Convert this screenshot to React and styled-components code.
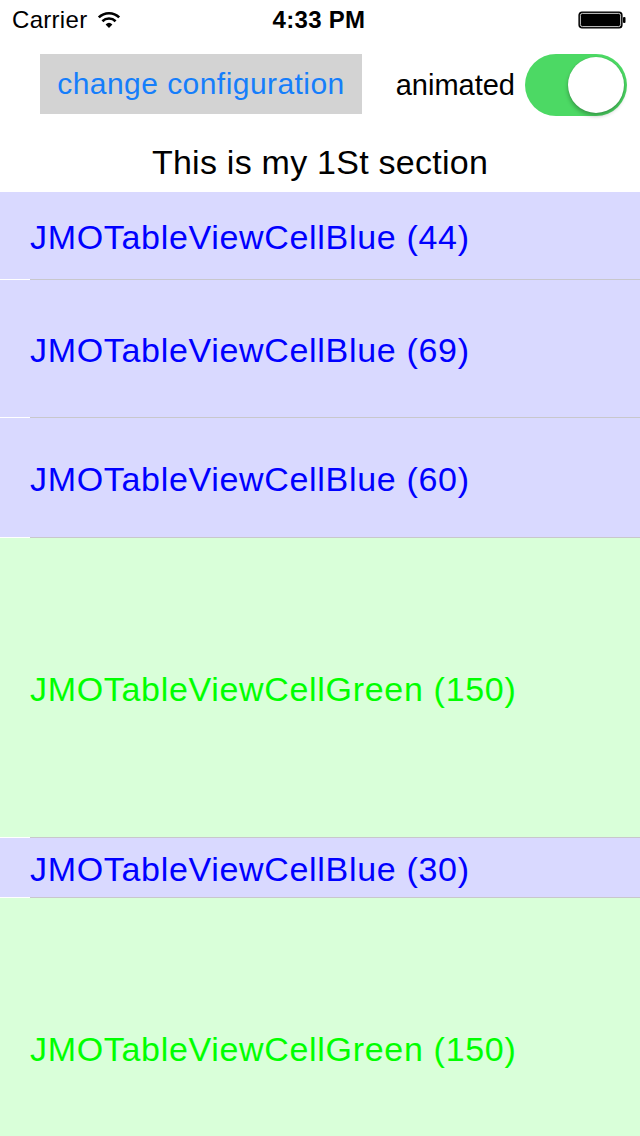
import React from "react";
import styled, { createGlobalStyle } from "styled-components";

const Global = createGlobalStyle`
  html, body { margin: 0; padding: 0; background: #ffffff; }
  body { font-family: "Liberation Sans", Arial, Helvetica, sans-serif; }
`;

const Screen = styled.div`
  width: 640px;
  height: 1136px;
  overflow: hidden;
  background: #ffffff;
  display: flex;
  flex-direction: column;
`;

const StatusBar = styled.div`
  height: 40px;
  flex: none;
  display: flex;
  align-items: center;
  padding: 0 14px 0 12px;
  font-size: 24px;
  color: #000;
`;

const Carrier = styled.div`
  display: flex;
  align-items: center;
  gap: 10px;
  flex: 1;
  letter-spacing: 0.3px;
`;

const Time = styled.div`
  font-weight: bold;
  flex: none;
  letter-spacing: 0.3px;
`;

const Right = styled.div`
  flex: 1;
  display: flex;
  justify-content: flex-end;
`;

const Toolbar = styled.div`
  height: 100px;
  flex: none;
  display: flex;
  align-items: flex-start;
  padding: 14px 13px 0 40px;
  box-sizing: border-box;
`;

const ConfigButton = styled.button`
  width: 322px;
  height: 60px;
  background: #d3d3d3;
  border: none;
  padding: 0;
  margin: 0;
  font-family: inherit;
  font-size: 30px;
  letter-spacing: 0.45px;
  color: #157efb;
  display: flex;
  align-items: center;
  justify-content: center;
`;

const SwitchGroup = styled.div`
  margin-left: auto;
  display: flex;
  align-items: center;
  height: 62px;
  gap: 10px;
`;

const SwitchLabel = styled.span`
  font-size: 29px;
  color: #000;
`;

const Switch = styled.div`
  width: 102px;
  height: 62px;
  border-radius: 31px;
  background: #4cd964;
  position: relative;
  box-sizing: border-box;
`;

const Knob = styled.div`
  position: absolute;
  top: 3px;
  right: 3px;
  width: 56px;
  height: 56px;
  border-radius: 50%;
  background: #ffffff;
  box-shadow: 0 3px 4px rgba(0, 0, 0, 0.28), 0 0 1px rgba(0, 0, 0, 0.2);
`;

const SectionHeader = styled.div`
  height: 52px;
  flex: none;
  display: flex;
  justify-content: center;
  align-items: flex-start;
  padding-top: 2px;
  box-sizing: border-box;
  font-size: 34px;
  letter-spacing: 0.25px;
  color: #000;
  line-height: 40px;
`;

const palette = {
  blue: { bg: "#d9d9ff", fg: "#0000ff" },
  green: { bg: "#d9ffd9", fg: "#00ff00" },
};

const Cell = styled.div`
  flex: none;
  height: ${(p) => p.$h * 2}px;
  background: ${(p) => palette[p.$kind].bg};
  color: ${(p) => palette[p.$kind].fg};
  display: flex;
  align-items: center;
  padding-left: 30px;
  padding-top: 3px;
  box-sizing: border-box;
  font-size: 34px;
  letter-spacing: 0.68px;
  position: relative;
`;

const Separator = styled.div`
  position: absolute;
  left: 0;
  right: 0;
  bottom: 0;
  height: 1px;
  background: linear-gradient(to right, #ffffff 0 30px, #c8c7cc 30px);
`;

const rows = [
  { kind: "blue", name: "JMOTableViewCellBlue", h: 44 },
  { kind: "blue", name: "JMOTableViewCellBlue", h: 69 },
  { kind: "blue", name: "JMOTableViewCellBlue", h: 60 },
  { kind: "green", name: "JMOTableViewCellGreen", h: 150 },
  { kind: "blue", name: "JMOTableViewCellBlue", h: 30 },
  { kind: "green", name: "JMOTableViewCellGreen", h: 150 },
];

const Wifi = () => (
  <svg width="24" height="18" viewBox="0 0 24 18">
    <path d="M12 17 L8.6 13.4 A5 5 0 0 1 15.4 13.4 Z" fill="#000" />
    <path d="M5.4 10.2 A9.5 9.5 0 0 1 18.6 10.2" stroke="#000" strokeWidth="2.6" fill="none" />
    <path d="M1.8 6.4 A14.5 14.5 0 0 1 22.2 6.4" stroke="#000" strokeWidth="2.6" fill="none" />
  </svg>
);

const Battery = () => (
  <svg width="48" height="18" viewBox="0 0 48 18">
    <rect x="1" y="1" width="43" height="16" rx="3" fill="#000" stroke="#000" strokeWidth="1.2" />
    <rect x="2.4" y="2.4" width="40.2" height="13.2" rx="2" fill="none" stroke="#fff" strokeWidth="0.8" />
    <rect x="45" y="6" width="2.5" height="6" rx="1" fill="#000" />
  </svg>
);

export default function App() {
  return (
    <>
      <Global />
      <Screen>
        <StatusBar>
          <Carrier>
            Carrier <Wifi />
          </Carrier>
          <Time>4:33 PM</Time>
          <Right>
            <Battery />
          </Right>
        </StatusBar>
        <Toolbar>
          <ConfigButton>change configuration</ConfigButton>
          <SwitchGroup>
            <SwitchLabel>animated</SwitchLabel>
            <Switch>
              <Knob />
            </Switch>
          </SwitchGroup>
        </Toolbar>
        <SectionHeader>This is my 1St section</SectionHeader>
        {rows.map((r, i) => (
          <Cell key={i} $kind={r.kind} $h={r.h}>
            {r.name} ({r.h})
            <Separator />
          </Cell>
        ))}
      </Screen>
    </>
  );
}
